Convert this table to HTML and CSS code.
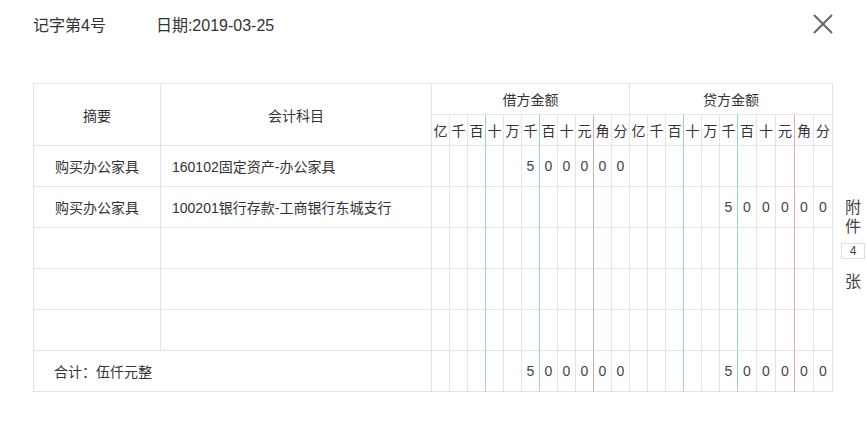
FILE: index.html
```html
<!DOCTYPE html>
<html lang="zh-CN">
<head>
<meta charset="utf-8">
<title>记账凭证</title>
<link rel="stylesheet" href="styles.css">
</head>
<body>
<div class="page">
  <header class="top">
    <div class="meta"><span class="no">记字第4号</span><span class="date">日期:2019-03-25</span></div>
    <button class="close" aria-label="关闭"><svg width="20" height="20" viewBox="0 0 20 20"><path d="M1 1L19 19M19 1L1 19" stroke="#666" stroke-width="2" fill="none"/></svg></button>
  </header>
  <div class="voucher">
    <div class="grid">
      <div class="c h span2r">摘要</div>
      <div class="c h span2r">会计科目</div>
      <div class="c h span11">借方金额</div>
      <div class="c h span11">贷方金额</div>

      <div class="c u">亿</div><div class="c u">千</div><div class="c u b">百</div><div class="c u">十</div><div class="c u">万</div><div class="c u b">千</div><div class="c u">百</div><div class="c u">十</div><div class="c u r">元</div><div class="c u">角</div><div class="c u">分</div>
      <div class="c u">亿</div><div class="c u">千</div><div class="c u b">百</div><div class="c u">十</div><div class="c u">万</div><div class="c u b">千</div><div class="c u">百</div><div class="c u">十</div><div class="c u r">元</div><div class="c u">角</div><div class="c u">分</div>

      <div class="c t">购买办公家具</div><div class="c t left">160102固定资产-办公家具</div>
      <div class="c d"></div><div class="c d"></div><div class="c d b"></div><div class="c d"></div><div class="c d"></div><div class="c d b">5</div><div class="c d">0</div><div class="c d">0</div><div class="c d r">0</div><div class="c d">0</div><div class="c d">0</div>
      <div class="c d"></div><div class="c d"></div><div class="c d b"></div><div class="c d"></div><div class="c d"></div><div class="c d b"></div><div class="c d"></div><div class="c d"></div><div class="c d r"></div><div class="c d"></div><div class="c d"></div>

      <div class="c t">购买办公家具</div><div class="c t left">100201银行存款-工商银行东城支行</div>
      <div class="c d"></div><div class="c d"></div><div class="c d b"></div><div class="c d"></div><div class="c d"></div><div class="c d b"></div><div class="c d"></div><div class="c d"></div><div class="c d r"></div><div class="c d"></div><div class="c d"></div>
      <div class="c d"></div><div class="c d"></div><div class="c d b"></div><div class="c d"></div><div class="c d"></div><div class="c d b">5</div><div class="c d">0</div><div class="c d">0</div><div class="c d r">0</div><div class="c d">0</div><div class="c d">0</div>

      <div class="c t"></div><div class="c t left"></div>
      <div class="c d"></div><div class="c d"></div><div class="c d b"></div><div class="c d"></div><div class="c d"></div><div class="c d b"></div><div class="c d"></div><div class="c d"></div><div class="c d r"></div><div class="c d"></div><div class="c d"></div>
      <div class="c d"></div><div class="c d"></div><div class="c d b"></div><div class="c d"></div><div class="c d"></div><div class="c d b"></div><div class="c d"></div><div class="c d"></div><div class="c d r"></div><div class="c d"></div><div class="c d"></div>

      <div class="c t"></div><div class="c t left"></div>
      <div class="c d"></div><div class="c d"></div><div class="c d b"></div><div class="c d"></div><div class="c d"></div><div class="c d b"></div><div class="c d"></div><div class="c d"></div><div class="c d r"></div><div class="c d"></div><div class="c d"></div>
      <div class="c d"></div><div class="c d"></div><div class="c d b"></div><div class="c d"></div><div class="c d"></div><div class="c d b"></div><div class="c d"></div><div class="c d"></div><div class="c d r"></div><div class="c d"></div><div class="c d"></div>

      <div class="c t"></div><div class="c t left"></div>
      <div class="c d"></div><div class="c d"></div><div class="c d b"></div><div class="c d"></div><div class="c d"></div><div class="c d b"></div><div class="c d"></div><div class="c d"></div><div class="c d r"></div><div class="c d"></div><div class="c d"></div>
      <div class="c d"></div><div class="c d"></div><div class="c d b"></div><div class="c d"></div><div class="c d"></div><div class="c d b"></div><div class="c d"></div><div class="c d"></div><div class="c d r"></div><div class="c d"></div><div class="c d"></div>

      <div class="c t total">合计：伍仟元整</div>
      <div class="c d"></div><div class="c d"></div><div class="c d b"></div><div class="c d"></div><div class="c d"></div><div class="c d b">5</div><div class="c d">0</div><div class="c d">0</div><div class="c d r">0</div><div class="c d">0</div><div class="c d">0</div>
      <div class="c d"></div><div class="c d"></div><div class="c d b"></div><div class="c d"></div><div class="c d"></div><div class="c d b">5</div><div class="c d">0</div><div class="c d">0</div><div class="c d r">0</div><div class="c d">0</div><div class="c d">0</div>
    </div>
    <div class="side">
      <span class="side-ch">附</span>
      <span class="side-ch">件</span>
      <span class="side-box">4</span>
      <span class="side-ch last">张</span>
    </div>
  </div>
</div>
</body>
</html>
```

FILE: styles.css
```css
* { box-sizing: border-box; }
html, body { margin: 0; padding: 0; background: #fff; }
body {
  font-family: "Liberation Sans", "Noto Sans CJK SC", sans-serif;
  color: #333;
}
.page { width: 867px; }
.top {
  height: 47px;
  padding: 0 34px 0 33px;
  display: flex;
  align-items: center;
  justify-content: space-between;
}
.meta { font-size: 16px; color: #333; display: flex; }
.date { margin-left: 50px; }
.close {
  border: 0; background: none; padding: 0; margin: 0;
  width: 20px; height: 20px; display: block; cursor: pointer;
}
.close svg { display: block; }
.voucher {
  margin-top: 36px;
  padding-left: 33px;
  display: flex;
  align-items: flex-start;
}
.grid {
  display: grid;
  grid-template-columns: 127px 271px repeat(11, 18px) repeat(6, 18px) repeat(5, 19px);
  grid-template-rows: 31px 31px repeat(6, 41px);
  border-top: 1px solid #e4e4e4;
  border-left: 1px solid #e4e4e4;
  width: 800px;
}
.c {
  border-right: 1px solid #e4e4e4;
  border-bottom: 1px solid #e4e4e4;
  display: flex;
  align-items: center;
  justify-content: center;
  font-size: 14px;
  color: #333;
  white-space: nowrap;
  overflow: hidden;
}
.span2r { grid-row: span 2; }
.span11 { grid-column: span 11; }
.u { font-size: 14px; }
.d { font-size: 14px; color: #444; }
.c.b { border-right-color: #98cfe8; }
.c.r { border-right-color: #e3aaaa; }
.left { justify-content: flex-start; padding-left: 11px; }
.total { grid-column: span 2; justify-content: flex-start; padding-left: 20px; }
.side {
  margin-left: 8px;
  margin-top: 115px;
  width: 24px;
  display: flex;
  flex-direction: column;
  align-items: center;
  font-size: 16px;
  color: #444;
}
.side-ch { line-height: 19px; display: block; }
.side-box {
  margin-top: 7px;
  width: 24px;
  height: 16px;
  border: 1px solid #ddd;
  font-size: 12px;
  line-height: 14px;
  text-align: center;
  color: #444;
}
.side-ch.last { margin-top: 13px; }
```
